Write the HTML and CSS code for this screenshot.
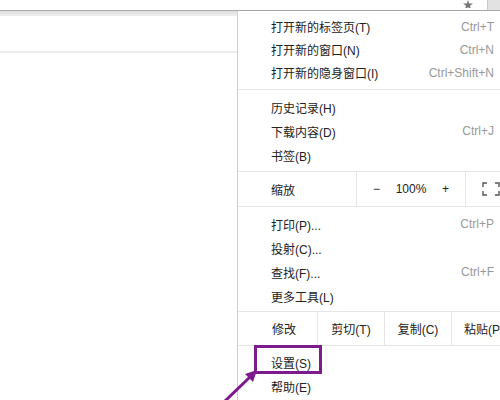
FILE: index.html
```html
<!DOCTYPE html>
<html lang="zh-CN">
<head>
  <meta charset="UTF-8">
  <title>菜单</title>
  <link rel="stylesheet" href="styles.css">
</head>
<body>
  <div class="topbar">
    <svg class="star" width="10" height="8" viewBox="0 -3 10 8">
      <polygon points="5,-3 6.2,0.6 10,0.6 7,2.8 8.1,6.4 5,4.2 1.9,6.4 3,2.8 0,0.6 3.8,0.6" fill="#777"/>
    </svg>
    <span class="topblock"></span>
  </div>
  <div class="page">
    <div class="left">
      <div class="band"></div>
      <div class="field"></div>
    </div>
    <div class="menu">
      <div class="group g1">
        <div class="item"><span>打开新的标签页(T)</span><span class="key">Ctrl+T</span></div>
        <div class="item"><span>打开新的窗口(N)</span><span class="key">Ctrl+N</span></div>
        <div class="item"><span>打开新的隐身窗口(I)</span><span class="key">Ctrl+Shift+N</span></div>
      </div>
      <div class="group g2">
        <div class="item"><span>历史记录(H)</span></div>
        <div class="item"><span>下载内容(D)</span><span class="key">Ctrl+J</span></div>
        <div class="item"><span>书签(B)</span></div>
      </div>
      <div class="zoomrow">
        <div class="zcell zlabel">缩放</div>
        <div class="zcell zctrl"><span>−</span><span>100%</span><span>+</span></div>
        <div class="zcell zfull">
          <svg width="18" height="14" viewBox="0 0 18 14">
            <path d="M1 5V1h4M13 1h4v4M17 9v4h-4M5 13H1V9" fill="none" stroke="#555" stroke-width="1.4"/>
          </svg>
        </div>
      </div>
      <div class="group g4">
        <div class="item"><span>打印(P)...</span><span class="key">Ctrl+P</span></div>
        <div class="item"><span>投射(C)...</span></div>
        <div class="item"><span>查找(F)...</span><span class="key">Ctrl+F</span></div>
        <div class="item"><span>更多工具(L)</span></div>
      </div>
      <div class="editrow">
        <div class="ecell elabel">修改</div>
        <div class="ecell">剪切(T)</div>
        <div class="ecell">复制(C)</div>
        <div class="ecell elast">粘贴(P)</div>
      </div>
      <div class="group g6">
        <div class="item"><span>设置(S)</span></div>
        <div class="item"><span>帮助(E)</span></div>
      </div>
    </div>
  </div>

  <div class="highlight"></div>
  <svg class="arrow" width="50" height="40" viewBox="0 0 50 40">
    <line x1="4" y1="40" x2="30" y2="15" stroke="#7d1a8c" stroke-width="3"/>
    <polygon points="37,8 25,12 33,20" fill="#7d1a8c"/>
  </svg>
</body>
</html>
```

FILE: styles.css
```css
body { margin: 0; width: 500px; height: 400px; overflow: hidden; background: #fff; font-family: "Liberation Sans", "Noto Sans CJK SC", sans-serif; font-size: 12px; color: #222; position: relative; }
.topbar { height: 10px; border-bottom: 1px solid #a8a8a8; display: flex; justify-content: flex-end; align-items: flex-start; }
.star { margin-right: 14px; }
.topblock { width: 12px; height: 10px; background: #e2e2e2; border-left: 1px solid #c8c8c8; }
.page { display: flex; height: 389px; }
.left { flex: none; width: 237px; border-right: 1px solid #cfcfcf; }
.band { height: 5px; background: linear-gradient(#dcdcdc, #f0f0f0); }
.field { height: 35px; border-bottom: 2px solid #ececec; }
.menu { flex: 1; min-width: 0; overflow: hidden; background: #fff; }
.group { border-bottom: 1px solid #e6e6e6; }
.g1 { padding: 4px 0 5px; }
.g1 .item { height: 23px; }
.g2 { padding: 5px 0 4px; }
.g4 { padding: 5px 0 3px; }
.g6 { padding: 4px 0 0; border-bottom: none; }
.item { height: 24px; display: flex; align-items: center; justify-content: space-between; padding: 0 6px 0 33px; }
.key { color: #999; }
.zoomrow { display: flex; height: 34px; border-bottom: 1px solid #e6e6e6; }
.zcell { display: flex; align-items: center; flex: none; }
.zlabel { width: 85px; padding-left: 33px; border-right: 1px solid #e6e6e6; }
.zctrl { width: 109px; justify-content: space-around; padding: 0 8px; box-sizing: border-box; border-right: 1px solid #e6e6e6; }
.zfull { padding-left: 16px; }
.editrow { display: flex; height: 33px; border-bottom: 1px solid #e6e6e6; }
.ecell { flex: none; width: 66px; display: flex; align-items: center; justify-content: center; border-right: 1px solid #e6e6e6; }
.elabel { width: 45px; justify-content: flex-start; padding-left: 34px; }
.elast { width: 60px; border-right: none; justify-content: flex-start; padding-left: 12px; white-space: nowrap; }
.highlight { position: absolute; left: 254px; top: 345px; width: 62px; height: 23px; border: 3px solid #7d1a8c; }
.arrow { position: absolute; left: 220px; top: 362px; }
```
